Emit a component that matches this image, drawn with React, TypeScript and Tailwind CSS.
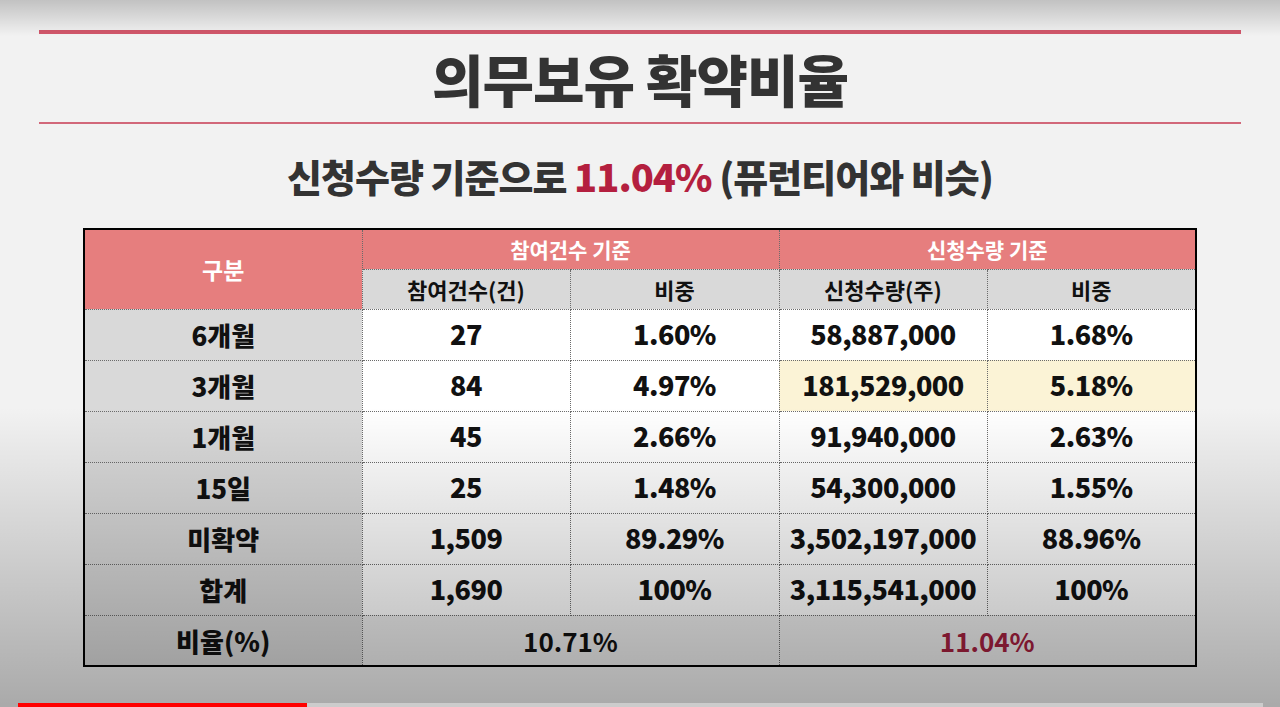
const font = { fontFamily: '"Noto Sans CJK KR", "Noto Sans", sans-serif' }

// ---- Data ----

interface Row {
  label: string
  count: string
  countPct: string
  qty: string
  qtyPct: string
  highlight?: boolean
}

const rows: Row[] = [
  { label: '6개월', count: '27', countPct: '1.60%', qty: '58,887,000', qtyPct: '1.68%' },
  { label: '3개월', count: '84', countPct: '4.97%', qty: '181,529,000', qtyPct: '5.18%', highlight: true },
  { label: '1개월', count: '45', countPct: '2.66%', qty: '91,940,000', qtyPct: '2.63%' },
  { label: '15일', count: '25', countPct: '1.48%', qty: '54,300,000', qtyPct: '1.55%' },
  { label: '미확약', count: '1,509', countPct: '89.29%', qty: '3,502,197,000', qtyPct: '88.96%' },
  { label: '합계', count: '1,690', countPct: '100%', qty: '3,115,541,000', qtyPct: '100%' },
]

const cell = 'border border-dotted border-[#6b6b6b] text-center align-middle p-0'
const num = 'text-[27px] tracking-[-0.5px]'

export default function App() {
  return (
    <div className="relative w-full h-[707px] overflow-hidden bg-[#f2f2f2]" style={font}>
      <div className="flex flex-col items-center pt-[30px]">
        {/* title block */}
        <div className="w-[1202px] h-[4px] bg-[#d2576b]" />
        <h1 className="h-[88px] flex items-center text-[56px] font-black text-[#333] tracking-[-1px]">
          의무보유 확약비율
        </h1>
        <div className="w-[1202px] h-[2px] bg-[#d2687a]" />

        <p className="mt-[33px] text-[38px] font-black text-[#333] leading-none tracking-[-1px]">
          신청수량 기준으로 <span className="text-[#b41f3f]">11.04%</span> (퓨런티어와 비슷)
        </p>

        {/* table */}
        <table className="mt-[33px] w-[1112px] table-fixed border-collapse border-2 border-black">
          <colgroup>
            <col className="w-[278px]" />
            <col className="w-[208px]" />
            <col className="w-[209px]" />
            <col className="w-[208px]" />
            <col className="w-[209px]" />
          </colgroup>
          <thead>
            <tr className="h-[40px] bg-[#e67e7e] text-white text-[21px] font-black">
              <th rowSpan={2} className={`${cell} text-[23px]`}>구분</th>
              <th colSpan={2} className={cell}>참여건수 기준</th>
              <th colSpan={2} className={cell}>신청수량 기준</th>
            </tr>
            <tr className="h-[40px] bg-[#d9d9d9] text-[#111] text-[22px] font-black">
              <th className={cell}>참여건수(건)</th>
              <th className={cell}>비중</th>
              <th className={cell}>신청수량(주)</th>
              <th className={cell}>비중</th>
            </tr>
          </thead>
          <tbody className="text-[26px] font-black text-[#111]">
            {rows.map((r) => (
              <tr key={r.label} className="h-[51px]">
                <td className={`${cell} bg-[#d9d9d9]`}>{r.label}</td>
                <td className={`${cell} ${num} bg-white`}>{r.count}</td>
                <td className={`${cell} ${num} bg-white`}>{r.countPct}</td>
                <td className={`${cell} ${num} ${r.highlight ? 'bg-[#fbf3d6]' : 'bg-white'}`}>{r.qty}</td>
                <td className={`${cell} ${num} ${r.highlight ? 'bg-[#fbf3d6]' : 'bg-white'}`}>{r.qtyPct}</td>
              </tr>
            ))}
            <tr className="h-[51px]">
              <td className={`${cell} bg-[#d9d9d9]`}>비율(%)</td>
              <td colSpan={2} className={`${cell} bg-[#ececec] font-semibold`}>10.71%</td>
              <td colSpan={2} className={`${cell} bg-[#ececec] font-semibold text-[#a3203e]`}>11.04%</td>
            </tr>
          </tbody>
        </table>
      </div>

      {/* video shading over the slide */}
      <div className="pointer-events-none absolute inset-x-0 top-0 h-[36px] bg-gradient-to-b from-black/20 to-transparent" />
      <div className="pointer-events-none absolute inset-x-0 bottom-0 h-[300px] bg-gradient-to-b from-transparent to-black/30" />

      {/* progress bar */}
      <div className="absolute left-[18px] right-[17px] bottom-0 h-[4px] flex">
        <div className="w-[289px] bg-[#ff0000]" />
        <div className="flex-1 bg-white/40" />
      </div>
    </div>
  )
}
